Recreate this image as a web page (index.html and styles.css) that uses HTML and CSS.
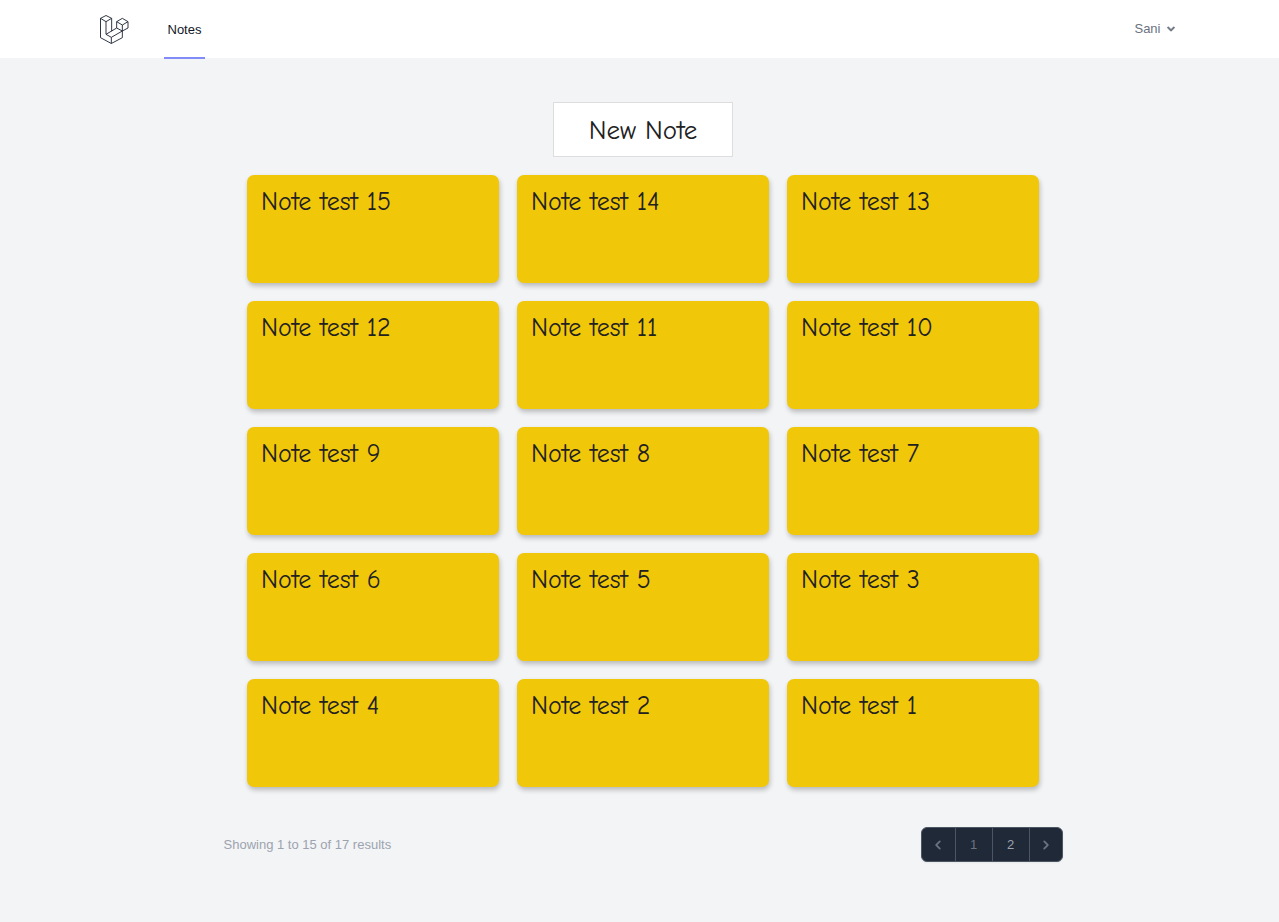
FILE: index.html
```html
<!DOCTYPE html>
<html lang="en">
<head>
<meta charset="utf-8">
<meta name="viewport" content="width=device-width, initial-scale=1">
<title>Notes</title>
<link rel="stylesheet" href="styles.css">
</head>
<body>
<header class="topbar">
  <div class="topbar-inner">
    <a class="logo" href="#" aria-label="Home">
      <svg viewBox="60 44 87 87" width="29" height="29" fill="none" stroke="#1f2937" stroke-width="2.8" stroke-linejoin="round">
        <path d="M61.5 54 78 45.5 95 54 95 93M61.5 54 78 64 95 54M61.5 54V112L94 129.5 127 112V74M78 64V102L94 111V129.5M78 102 110 83 127 92 94 111M110 83V64L127 54 144 64V83L127 92M110 64 127 74 144 64"/>
      </svg>
    </a>
    <nav class="nav"><a class="nav-link" href="#" aria-current="page">Notes</a></nav>
    <button class="user" type="button">Sani
      <svg viewBox="0 0 20 20" width="14" height="14" fill="currentColor" stroke="currentColor" stroke-width="1"><path fill-rule="evenodd" d="M5.293 7.293a1 1 0 011.414 0L10 10.586l3.293-3.293a1 1 0 111.414 1.414l-4 4a1 1 0 01-1.414 0l-4-4a1 1 0 010-1.414z"/></svg>
    </button>
  </div>
</header>
<main class="content">
  <button class="new-note" type="button">New Note</button>
  <section class="notes" aria-label="Notes">
    <article class="note">Note test 15</article>
    <article class="note">Note test 14</article>
    <article class="note">Note test 13</article>
    <article class="note">Note test 12</article>
    <article class="note">Note test 11</article>
    <article class="note">Note test 10</article>
    <article class="note">Note test 9</article>
    <article class="note">Note test 8</article>
    <article class="note">Note test 7</article>
    <article class="note">Note test 6</article>
    <article class="note">Note test 5</article>
    <article class="note">Note test 3</article>
    <article class="note">Note test 4</article>
    <article class="note">Note test 2</article>
    <article class="note">Note test 1</article>
  </section>
  <footer class="footer">
    <p class="summary">Showing 1 to 15 of 17 results</p>
    <nav class="pages" aria-label="Pagination">
      <button class="page" type="button" disabled aria-label="Previous"><svg viewBox="0 0 20 20" width="18" height="18" fill="currentColor"><path fill-rule="evenodd" d="M12.707 5.293a1 1 0 010 1.414L9.414 10l3.293 3.293a1 1 0 01-1.414 1.414l-4-4a1 1 0 010-1.414l4-4a1 1 0 011.414 0z"/></svg></button>
      <a class="page page-number" aria-current="page">1</a>
      <a class="page page-number page-other" href="#">2</a>
      <a class="page" href="#" aria-label="Next"><svg viewBox="0 0 20 20" width="18" height="18" fill="currentColor"><path fill-rule="evenodd" d="M7.293 14.707a1 1 0 010-1.414L10.586 10 7.293 6.707a1 1 0 011.414-1.414l4 4a1 1 0 010 1.414l-4 4a1 1 0 01-1.414 0z"/></svg></a>
    </nav>
  </footer>
</main>
</body>
</html>
```
FILE: styles.css
```css
* { box-sizing: border-box; }
body {
  margin: 0;
  min-height: 100vh;
  background: #f3f4f6;
  font: 13px/18px "Liberation Sans", Arial, sans-serif;
}
a { color: inherit; text-decoration: none; }
button { font: inherit; }
svg { display: block; }
.topbar { height: 58px; background: #fff; }
.topbar-inner {
  display: flex;
  align-items: center;
  max-width: 1152px;
  height: 59px;
  margin: 0 auto;
  padding: 0 36px;
}
.nav { align-self: stretch; display: flex; margin-left: 35px; }
.nav-link {
  display: flex;
  align-items: center;
  padding: 2px 4px 0;
  border-bottom: 2px solid #818cf8;
  color: #111827;
}
.user {
  display: flex;
  align-items: center;
  gap: 3px;
  margin-left: auto;
  padding: 0 2px 1px;
  border: 0;
  background: none;
  color: #6b7280;
}
.content {
  display: flex;
  flex-direction: column;
  align-items: center;
  padding: 44px 0 36px 7px;
}
.new-note, .note {
  font-family: "Comic Sans MS", "Comic Neue", cursive;
  font-size: 26px;
  line-height: 36px;
  color: #212121;
}
.new-note {
  padding: 10px 34px 7px;
  min-width: 180px;
  border: 1px solid #ddd;
  background: #fff;
  font-size: 27px;
}
.notes {
  display: grid;
  grid-template-columns: repeat(3, 1fr);
  grid-auto-rows: minmax(108px, auto);
  gap: 18px;
  width: 100%;
  max-width: 792px;
  margin-top: 18px;
}
.note {
  padding: 9px 14px;
  border-radius: 7px;
  background: #f1c70a;
  box-shadow: 1px 3px 5px rgba(0, 0, 0, .24);
}
.footer {
  display: flex;
  justify-content: space-between;
  align-items: center;
  width: 100%;
  max-width: 839px;
  margin-top: 40px;
}
.summary { margin: 0; color: #9ca3af; }
.pages {
  display: flex;
  border: 1px solid #4b5563;
  border-radius: 6px;
  overflow: hidden;
  background: #1f2937;
  color: #6b7280;
  box-shadow: 0 1px 2px rgba(0, 0, 0, .05);
}
.page {
  display: flex;
  align-items: center;
  justify-content: center;
  height: 33px;
  width: 33px;
  padding: 0;
  border: 0;
  background: none;
  color: inherit;
}
.page + .page { border-left: 1px solid #4b5563; }
.page-number { width: 37px; }
.page-other { color: #9ca3af; }
```
